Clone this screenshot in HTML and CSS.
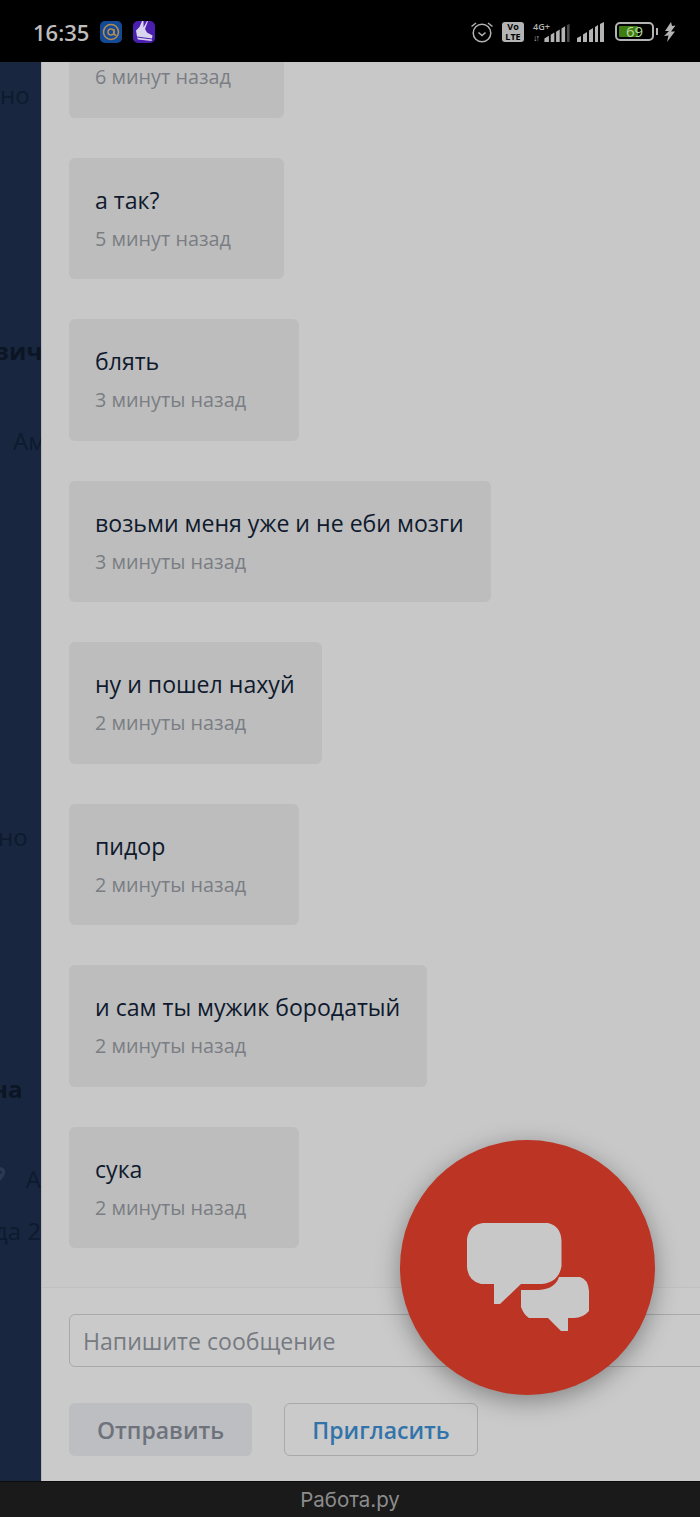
FILE: index.html
```html
<!DOCTYPE html>
<html lang="ru">
<head>
  <meta charset="UTF-8">
  <meta name="viewport" content="width=device-width, initial-scale=1.0">
  <title>Работа.ру</title>
  <link rel="stylesheet" href="styles.css">
</head>
<body>
  <header class="status-bar">
    <div class="status-left">
      <span class="clock">16:35</span>
      <svg class="app-icon" viewBox="0 0 22 22">
        <rect width="22" height="22" rx="5" fill="#134a96"/>
        <circle cx="11" cy="11" r="7.500" fill="none" stroke="#b58a55" stroke-width="1.600"/>
        <circle cx="11" cy="11" r="3" fill="none" stroke="#b58a55" stroke-width="1.600"/>
        <path d="M14 8v4.500q0 2 2.500 1.500" fill="none" stroke="#b58a55" stroke-width="1.600"/>
      </svg>
      <svg class="app-icon" viewBox="0 0 22 22">
        <rect width="22" height="22" rx="5" fill="#4a1fb0"/>
        <path d="M9 0 6.500 6 3 9.500 4 15.500 19 17.500 19.500 14.500 14 11.500 12 8 15 0 14 0 10.500 6.500 10.500 0Z" fill="#d8d4ee"/>
        <path d="M4 16.500 19 18.500 18.500 20 5 18.500Z" fill="#d8d4ee"/>
      </svg>
    </div>
    <div class="status-right">
      <svg class="alarm" width="24" height="22" viewBox="0 0 24 22" fill="none" stroke="#b4b4b4">
        <circle cx="12" cy="12" r="8.800" stroke-width="1.500"/>
        <path d="M8.500 11.500 12 14.500 15.500 11.500" stroke-width="1.500"/>
        <path d="M1.500 5.500 6 2M22.500 5.500 18 2" stroke-width="1.500"/>
      </svg>
      <span class="volte">Vo<br>LTE</span>
      <div class="signal-group">
        <div class="net-label"><span class="net-top">4G+</span><span class="net-arrows">↓↑</span></div>
        <svg width="26" height="18" viewBox="0 0 28 20" fill="#b4b4b4">
          <path d="M0 16 5 13V20H0ZM7 12 11 9.500V20H7ZM13 8.500 17 6V20H13ZM19 5 23 2.500V20H19Z"/>
          <path d="M25 1 28 0V20H25Z" fill="#4a4a4a"/>
        </svg>
      </div>
      <svg class="signal-two" width="27" height="20" viewBox="0 0 27 20" fill="#b4b4b4">
        <path d="M0 16 4 14V20H0ZM6 12.500 10 10V20H6ZM12 8.500 16 6V20H12ZM18 5 21 3V20H18ZM23 2 27 0V20H23Z"/>
      </svg>
      <div class="battery">
        <div class="battery-shell"><div class="battery-fill"></div><span class="battery-num">69</span></div>
        <span class="battery-tip"></span>
      </div>
      <svg width="12" height="20" viewBox="0 0 12 20" fill="#b4b4b4">
        <path d="M7 0 1 9H5L0 14 4.500 13.500 3 20 11 9.500H7L11.500 3.500 8 4Z"/>
      </svg>
    </div>
  </header>

  <main class="screen">
    <aside class="backdrop">
      <div class="bd-line bd-a">но</div>
      <div class="bd-line bd-name bd-b">вич</div>
      <div class="bd-line bd-c">Ам</div>
      <div class="bd-line bd-d">но<span class="bd-gap">с</span></div>
      <div class="bd-line bd-name bd-e">на</div>
      <div class="bd-line bd-f">
        <svg class="bd-pin" width="20" height="26" viewBox="0 0 20 26" fill="#2a3a52"><path d="M10 1a9 9 0 0 0-9 9c0 6 9 15 9 15s9-9 9-15a9 9 0 0 0-9-9zm0 12a3 3 0 1 1 0-6 3 3 0 0 1 0 6z"/></svg>
        <span>А</span>
      </div>
      <div class="bd-line bd-g">да 2</div>
    </aside>

    <section class="chat">
      <div class="messages">
        <div class="msg"><p class="msg-text">а ты?</p><p class="msg-time">6 минут назад</p></div>
        <div class="msg"><p class="msg-text">а так?</p><p class="msg-time">5 минут назад</p></div>
        <div class="msg"><p class="msg-text">блять</p><p class="msg-time">3 минуты назад</p></div>
        <div class="msg"><p class="msg-text">возьми меня уже и не еби мозги</p><p class="msg-time">3 минуты назад</p></div>
        <div class="msg"><p class="msg-text">ну и пошел нахуй</p><p class="msg-time">2 минуты назад</p></div>
        <div class="msg"><p class="msg-text">пидор</p><p class="msg-time">2 минуты назад</p></div>
        <div class="msg"><p class="msg-text">и сам ты мужик бородатый</p><p class="msg-time">2 минуты назад</p></div>
        <div class="msg"><p class="msg-text">сука</p><p class="msg-time">2 минуты назад</p></div>
      </div>

      <footer class="composer">
        <div class="composer-input">Напишите сообщение</div>
        <div class="composer-actions">
          <button class="btn btn-send">Отправить</button>
          <button class="btn btn-invite">Пригласить</button>
        </div>
      </footer>
    </section>

    <div class="fab">
      <svg width="122" height="109" viewBox="0 0 122 109" fill="#c8c8c8">
        <path d="M16 0H81Q94 3 94.500 18V43Q92 59 75 61H54L33 81H27V61H14Q1 58 0 44V16Q2 2 16 0Z"/>
        <path d="M54 67H72Q88 66 92 54H113Q121 56 122 68V88Q116 95 107 95H101V108H94L81 95H62Q57 92 54 84Z"/>
      </svg>
    </div>
  </main>

  <nav class="nav-bar">Работа.ру</nav>
</body>
</html>
```

FILE: styles.css
```css
* {
  box-sizing: border-box;
}
html, body {
  margin: 0;
  padding: 0;
}
body {
  width: 700px;
  height: 1517px;
  display: flex;
  flex-direction: column;
  overflow: hidden;
  background: #000;
  font-family: "Open Sans", "Noto Sans", sans-serif;
}

/* status bar */
.status-bar {
  height: 62px;
  flex: none;
  background: #000;
  display: flex;
  justify-content: space-between;
  align-items: center;
  padding: 1px 24px 0 33px;
}
.status-left, .status-right {
  display: flex;
  align-items: center;
}
.clock {
  font-size: 22px;
  font-weight: 600;
  color: #bdbdbd;
  margin-right: 11px;
}
.app-icon {
  width: 22px;
  height: 22px;
  margin-right: 11px;
}
.alarm {
  margin-right: 8px;
}
.volte {
  width: 22px;
  height: 20px;
  margin-right: 9px;
  border-radius: 3px;
  background: #b4b4b4;
  color: #000;
  font-size: 9px;
  font-weight: 700;
  line-height: 10px;
  text-align: center;
}
.signal-group {
  display: flex;
  align-items: flex-end;
  height: 20px;
  margin-right: 7px;
}
.net-label {
  width: 11px;
  height: 20px;
  display: flex;
  flex-direction: column;
  justify-content: space-between;
  color: #b4b4b4;
  white-space: nowrap;
}
.net-top {
  font-size: 9px;
  line-height: 9px;
  font-weight: 600;
}
.net-arrows {
  font-size: 9px;
  line-height: 9px;
  letter-spacing: -2px;
}
.signal-two {
  margin-right: 11px;
}
.battery {
  display: flex;
  align-items: center;
  margin-right: 6px;
}
.battery-shell {
  width: 39px;
  height: 19px;
  border: 2px solid #b4b4b4;
  border-radius: 5px;
  padding: 2px;
  position: relative;
}
.battery-fill {
  width: 62%;
  height: 100%;
  background: #3f7d12;
  border-radius: 1px;
}
.battery-num {
  position: absolute;
  left: 0;
  right: 0;
  top: -1px;
  text-align: center;
  font-size: 15px;
  line-height: 17px;
  color: #b9d8a0;
}
.battery-tip {
  width: 2px;
  height: 7px;
  margin-left: 2px;
  background: #b4b4b4;
}

/* page under the overlay */
.screen {
  flex: 1;
  min-height: 0;
  display: flex;
  position: relative;
  overflow: hidden;
}
.backdrop {
  width: 41px;
  flex: none;
  background: #18263f;
  overflow: hidden;
  font-size: 24px;
  color: #0e1a2d;
}
.bd-line {
  height: 32px;
  line-height: 32px;
  white-space: nowrap;
  display: flex;
  align-items: center;
}
.bd-name {
  font-weight: 700;
  color: #0c1524;
}
.bd-a { margin: 17px 0 0 0; }
.bd-b { margin: 224px 0 0 -6px; }
.bd-c { margin: 58px 0 0 13px; }
.bd-d { margin: 364px 0 0 -2px; }
.bd-e { margin: 220px 0 0 -8px; }
.bd-f { margin: 58px 0 0 -6px; gap: 20px; }
.bd-g { margin: 20px 0 0 -6px; }
.bd-gap {
  margin-left: 14px;
}
.bd-pin {
  margin-top: -10px;
}

/* chat panel */
.chat {
  flex: 1;
  min-width: 0;
  display: flex;
  flex-direction: column;
  background: #c8c8c8;
  border-left: 1px solid #b4b5b9;
}
.messages {
  flex: 1;
  min-height: 0;
  overflow: hidden;
  display: flex;
  flex-direction: column;
  justify-content: flex-end;
  align-items: flex-start;
  gap: 40px;
  padding: 0 0 39px 27px;
  background: #c8c8c8;
}
.msg {
  flex: none;
  height: 121.500px;
  background: #bdbdbd;
  border-radius: 6px;
  padding: 24px 27px 0 26px;
}
.msg-text {
  margin: 0;
  font-size: 23.100px;
  line-height: 37px;
  color: #0f1a2e;
  white-space: nowrap;
}
.msg-time {
  margin: 3px 0 0;
  padding-right: 26px;
  font-size: 19.800px;
  line-height: 33px;
  color: #7a7d84;
  white-space: nowrap;
}
.composer {
  flex: none;
  height: 194px;
  padding: 26px 0 0 27px;
  border-top: 1px solid #c0c0c0;
  background: #cacaca;
}
.composer-input {
  width: 700px;
  height: 53px;
  border: 1px solid #a9a9a9;
  border-radius: 6px;
  padding-left: 13px;
  font-size: 23.100px;
  line-height: 53px;
  color: #767a82;
}
.composer-actions {
  display: flex;
  gap: 32px;
  margin-top: 36px;
}
.btn {
  height: 53px;
  border-radius: 6px;
  font-family: inherit;
  font-size: 23px;
  font-weight: 600;
  padding: 0;
}
.btn-send {
  width: 183px;
  border: 0;
  background: #bcbec2;
  color: #6e737b;
}
.btn-invite {
  width: 194px;
  border: 1px solid #a9a9a9;
  background: transparent;
  color: #3274aa;
}

/* floating chat button */
.fab {
  position: absolute;
  left: 400px;
  top: 1078px;
  width: 255px;
  height: 255px;
  border-radius: 50%;
  background: #bb3424;
  box-shadow: 0 6px 24px rgba(0, 0, 0, 0.35);
  display: flex;
  align-items: center;
  justify-content: center;
  padding-top: 19px;
}

/* android nav */
.nav-bar {
  height: 36px;
  flex: none;
  background: #1a1a1a;
  border-top: 1px solid #0d0d0d;
  color: #8c8c8c;
  font-family: "Inter", "Roboto", sans-serif;
  font-size: 20.500px;
  line-height: 36px;
  text-align: center;
}
```
